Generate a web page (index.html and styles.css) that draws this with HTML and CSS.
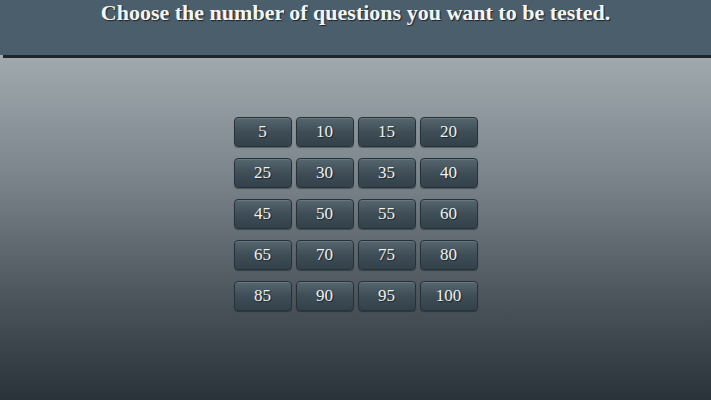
FILE: index.html
```html
<!DOCTYPE html>
<html lang="en">
<head>
  <meta charset="UTF-8">
  <meta name="viewport" content="width=device-width, initial-scale=1.0">
  <title>Quiz - Number of questions</title>
  <link rel="stylesheet" href="styles.css">
</head>
<body>
  <div class="header">
    <h1 class="title">Choose the number of questions you want to be tested.</h1>
  </div>
  <div class="rule"></div>

  <div class="content">
    <div class="grid">
      <button class="num">5</button>
      <button class="num">10</button>
      <button class="num">15</button>
      <button class="num">20</button>
      <button class="num">25</button>
      <button class="num">30</button>
      <button class="num">35</button>
      <button class="num">40</button>
      <button class="num">45</button>
      <button class="num">50</button>
      <button class="num">55</button>
      <button class="num">60</button>
      <button class="num">65</button>
      <button class="num">70</button>
      <button class="num">75</button>
      <button class="num">80</button>
      <button class="num">85</button>
      <button class="num">90</button>
      <button class="num">95</button>
      <button class="num">100</button>
    </div>
  </div>
</body>
</html>
```

FILE: styles.css
```css
html, body {
  height: 100%;
}
body {
  margin: 0;
  display: flex;
  flex-direction: column;
  font-family: "Liberation Serif", "Times New Roman", serif;
  background: #a0a9ae;
}
.header {
  height: 55px;
  background: #4b5e6b;
}
.rule {
  height: 3px;
  margin-left: 3px;
  background: #1c262c;
}
.title {
  margin: 0;
  padding-top: 1px;
  text-align: center;
  color: #f4f6f6;
  font-size: 22px;
  font-weight: bold;
  line-height: 24px;
  text-shadow: 1px 1px 1px #1a2228;
}
.content {
  flex: 1;
  background: linear-gradient(#a0a9ae, #7b848a 35%, #4d555c 70%, #2b333a);
  display: flex;
  justify-content: center;
  padding-top: 59px;
}
.grid {
  display: grid;
  grid-template-columns: repeat(4, 58px);
  grid-auto-rows: 30px;
  column-gap: 4px;
  row-gap: 11px;
  align-content: start;
}
.num {
  margin: 0;
  padding: 0;
  border: 1px solid #26323a;
  border-radius: 4px;
  background: linear-gradient(#56666f, #3e4d56 50%, #33424a);
  box-shadow: inset 0 1px 0 rgba(255, 255, 255, 0.12), 0 1px 1px rgba(0, 0, 0, 0.35);
  color: #eef2f2;
  font-family: "Liberation Serif", "Times New Roman", serif;
  font-size: 17px;
  text-shadow: 1px 1px 1px #1c262c;
  cursor: pointer;
}
```
